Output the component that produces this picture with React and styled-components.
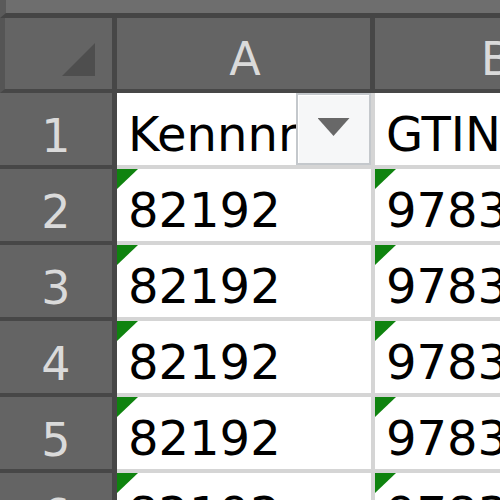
import styled, { createGlobalStyle } from 'styled-components';

const GlobalStyle = createGlobalStyle`
  html, body {
    margin: 0;
    padding: 0;
    background: #646464;
    overflow: hidden;
  }
  body {
    font-family: "DejaVu Sans", Verdana, sans-serif;
  }
`;

const rows = [
  { num: 1, a: 'Kennnr', b: 'GTIN', header: true },
  { num: 2, a: '82192', b: '9783060212345' },
  { num: 3, a: '82192', b: '9783060212352' },
  { num: 4, a: '82192', b: '9783060212369' },
  { num: 5, a: '82192', b: '9783060212376' },
  { num: 6, a: '82192', b: '9783060212383' },
];

const App = () => (
  <>
    <GlobalStyle />
    <StyledTopBar />
    <StyledSheet>
      <StyledCorner>
        <StyledCornerMark />
      </StyledCorner>
      <StyledColHeader>A</StyledColHeader>
      <StyledColHeader>B</StyledColHeader>
      {rows.map((row) => (
        <StyledRow key={row.num}>
          <StyledRowHeader>{row.num}</StyledRowHeader>
          <StyledCell $flag={!row.header}>
            <StyledCellText>{row.a}</StyledCellText>
            {row.header && (
              <StyledFilterButton aria-label="Filter">
                <StyledArrow />
              </StyledFilterButton>
            )}
          </StyledCell>
          <StyledCell $flag={!row.header}>
            <StyledCellText>{row.b}</StyledCellText>
          </StyledCell>
        </StyledRow>
      ))}
    </StyledSheet>
  </>
);

const StyledTopBar = styled.div`
  height: 13px;
  background: #6e6e6e;
  border-bottom: 5px solid #454545;
  border-left: 6px solid #5a5a5a;
  box-sizing: content-box;
`;

const StyledSheet = styled.div`
  display: grid;
  grid-template-columns: 117px 258px 1fr;
  grid-auto-rows: 76px;
  grid-template-rows: 75px;
  width: 620px;
`;

const StyledRow = styled.div`
  display: contents;
`;

const StyledHeaderBase = styled.div`
  box-sizing: border-box;
  background: #646464;
  border-bottom: 4px solid #474747;
  color: #dadada;
  font-size: 46px;
  line-height: 1;
  display: flex;
  align-items: flex-end;
  justify-content: center;
  padding-bottom: 7px;
`;

const StyledCorner = styled(StyledHeaderBase)`
  border-right: 5px solid #474747;
  border-left: 5px solid #555555;
  position: relative;
`;

const StyledCornerMark = styled.span`
  position: absolute;
  left: 57px;
  top: 25px;
  width: 33px;
  height: 33px;
  background: #4e4e4e;
  clip-path: polygon(100% 0, 100% 100%, 0 100%);
`;

const StyledColHeader = styled(StyledHeaderBase)`
  border-right: 5px solid #474747;
  padding-left: 3px;
`;

const StyledRowHeader = styled(StyledHeaderBase)`
  border-right: 5px solid #474747;
  padding-bottom: 6px;
`;

const StyledCell = styled.div`
  position: relative;
  box-sizing: border-box;
  background: #ffffff;
  border-right: 4px solid #d5d5d5;
  border-bottom: 4px solid #d5d5d5;
  overflow: hidden;
  display: flex;
  align-items: flex-end;
  padding: 0 0 7px 11px;

  &::before {
    content: '';
    display: ${({ $flag }) => ($flag ? 'block' : 'none')};
    position: absolute;
    left: 0;
    top: 0;
    width: 21px;
    height: 20px;
    background: #0f830f;
    clip-path: polygon(0 0, 100% 0, 0 100%);
  }
`;

const StyledCellText = styled.span`
  font-size: 48px;
  line-height: 1;
  color: #000000;
  white-space: nowrap;
`;

const StyledFilterButton = styled.div`
  position: absolute;
  top: 0;
  right: 0;
  width: 75px;
  height: 72px;
  box-sizing: border-box;
  background: #f6f7f8;
  border: 2px solid #c4c8cc;
  box-shadow: inset 1px 1px 0 #ffffff;
  display: flex;
  align-items: center;
  justify-content: center;
`;

const StyledArrow = styled.span`
  width: 32px;
  height: 18px;
  margin-top: -4px;
  background: #686868;
  clip-path: polygon(0 0, 100% 0, 50% 100%);
`;

export default App;
